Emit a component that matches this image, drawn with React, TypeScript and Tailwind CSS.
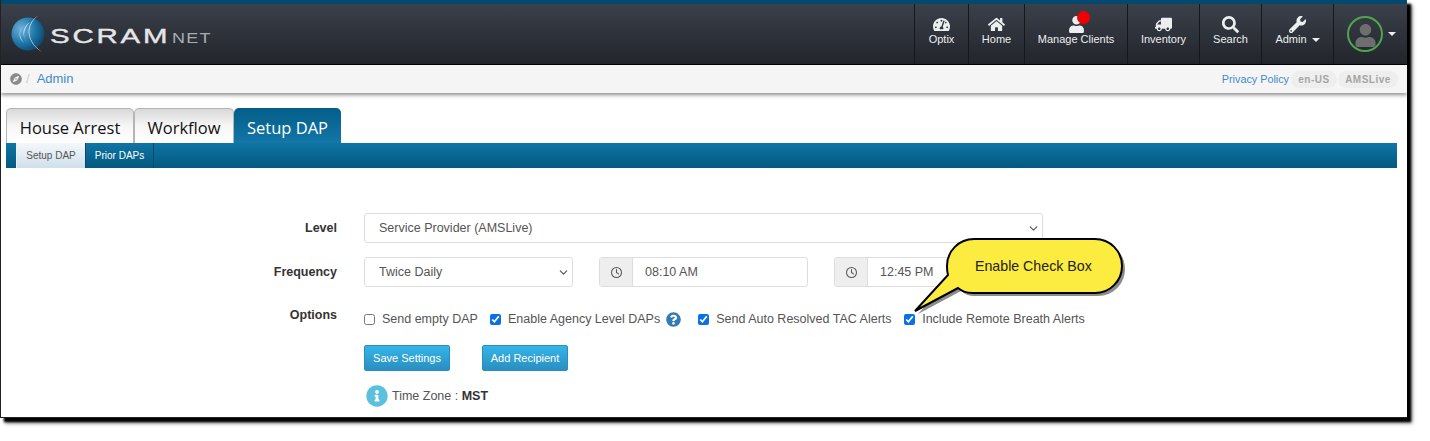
import type { ReactNode } from 'react'
import { FaCompass, FaHome, FaInfoCircle, FaQuestionCircle, FaSearch, FaTachometerAlt, FaTruck, FaUser, FaWrench } from 'react-icons/fa'
import { FaRegClock } from 'react-icons/fa6'
import { ChevronDown } from 'lucide-react'

const font = { sans: 'font-["Liberation_Sans",Arial,sans-serif]' }

const NavItem = ({ icon, label, width, caret, badge }: { icon: ReactNode; label: string; width: string; caret?: boolean; badge?: boolean }) => (
  <div className={`${width} relative flex h-full flex-col items-center border-l border-[#15171a] pt-[12px] text-[#eceef0]`}>
    <div className="relative flex h-[17px] items-center justify-center text-[17px]">
      {icon}
      {badge && <span className="absolute left-[9px] top-[-5px] h-[13px] w-[13px] rounded-full bg-[#f00000]" />}
    </div>
    <div className="mt-[-1px] flex items-center gap-[5px] whitespace-nowrap text-[11px] leading-[14px]">
      {label}
      {caret && <span className="mt-[1px] h-0 w-0 border-x-[4px] border-t-[4px] border-x-transparent border-t-[#eceef0]" />}
    </div>
  </div>
)

const Logo = () => (
  <div className="flex items-center pl-[10px]">
    <svg width="34" height="40" viewBox="0 0 34 40" className="mt-[-2px] shrink-0">
      <defs>
        <radialGradient id="globe" cx="0.3" cy="0.35" r="0.8">
          <stop offset="0" stopColor="#6fb4dc" />
          <stop offset="0.55" stopColor="#1d75a8" />
          <stop offset="1" stopColor="#0b3f60" />
        </radialGradient>
      </defs>
      <circle cx="17" cy="21" r="16.5" fill="url(#globe)" />
      <path d="M29 1C16 10 13 26 31 39C19 32 9 14 29 1Z" fill="#e6edf2" />
      <path d="M19 9C11 17 11 26 19 33C13 27 8 17 19 9Z" fill="#d4e2ec" />
      <path d="M13 12C7 18 7 25 13 30C9 25 7 18 13 12Z" fill="#b9d2e2" />
    </svg>
    <div className="ml-[5px] mt-[2px] flex items-baseline">
      <span className="text-[21px] leading-none tracking-[2px] text-[#e4e6e8] [-webkit-text-stroke:0.4px_#e4e6e8] [transform-origin:left] [transform:scaleX(1.4)]">SCRAM</span>
      <span className="ml-[36px] text-[15px] leading-none tracking-[1px] text-[#a9adb1] [transform-origin:left] [transform:scaleX(1.2)]">NET</span>
    </div>
  </div>
)

const Check = ({ label, checked, className }: { label: string; checked?: boolean; className?: string }) => (
  <label className={`${className ?? ''} flex items-center whitespace-nowrap`}>
    <input type="checkbox" defaultChecked={checked} className="mr-[7px] h-[11px] w-[11px] accent-[#0b6fe8]" />
    {label}
  </label>
)

const SelectBox = ({ value, className }: { value: string; className: string }) => (
  <div className={`${className} relative h-[30px]`}>
    <select className="h-full w-full appearance-none rounded-[3px] border border-[#ddd] bg-white pl-[14px] pr-[4px]">
      <option>{value}</option>
    </select>
    <ChevronDown size={13} strokeWidth={2} className="absolute right-[3px] top-[9px] text-[#555]" />
  </div>
)

const TimeField = ({ value, className }: { value: string; className: string }) => (
  <div className={`${className} flex h-[30px] rounded-[3px] border border-[#ddd]`}>
    <span className="flex w-[33px] items-center justify-center border-r border-[#ddd] bg-[#eee] text-[11px] text-[#555]">
      <FaRegClock />
    </span>
    <span className="flex flex-1 items-center pl-[12px]">{value}</span>
  </div>
)

const App = () => {
  return (
    <div className={`h-[441px] w-[1430px] overflow-hidden bg-white ${font.sans}`}>
      <div className="flex h-[418px] w-[1407px] flex-col border-b border-l border-[#222] bg-white shadow-[4px_4px_2px_#000,5px_5px_4px_rgba(0,0,0,0.6)]">
        {/* top bar */}
        <header className="flex h-[65px] shrink-0 justify-between border-b border-black border-t-[4px] border-t-[#03496f] bg-gradient-to-b from-[#3b404b] to-[#22252b]">
          <Logo />
          <nav className="flex h-full">
            <NavItem width="w-[54px]" icon={<FaTachometerAlt />} label="Optix" />
            <NavItem width="w-[56px]" icon={<FaHome />} label="Home" />
            <NavItem width="w-[103px]" icon={<FaUser />} label="Manage Clients" badge />
            <NavItem width="w-[72px]" icon={<FaTruck className="-scale-x-100" />} label="Inventory" />
            <NavItem width="w-[62px]" icon={<FaSearch />} label="Search" />
            <NavItem width="w-[72px]" icon={<FaWrench />} label="Admin" caret />
            <div className="flex h-full w-[74px] items-center border-l border-[#15171a] pl-[13px]">
              <div className="flex h-[36px] w-[36px] items-end justify-center overflow-hidden rounded-full border-2 border-[#4ea64e] text-[#6e6e6e]">
                <FaUser className="mb-[3px] text-[23px]" />
              </div>
              <span className="ml-[5px] h-0 w-0 border-x-[4px] border-t-[4px] border-x-transparent border-t-[#eceef0]" />
            </div>
          </nav>
        </header>

        {/* breadcrumb */}
        <div className="flex h-[28px] shrink-0 items-center justify-between bg-[#f5f5f5] pl-[9px] pr-[9px] shadow-[0_2px_4px_rgba(0,0,0,0.45)]">
          <div className="flex items-center text-[13px]">
            <FaCompass className="text-[12px] text-[#8a8a8a]" />
            <span className="ml-[4px] text-[#ccc]">/</span>
            <span className="ml-[7px] text-[#428bca]">Admin</span>
          </div>
          <div className="flex items-center text-[10.8px]">
            <span className="mr-[2px] text-[#428bca]">Privacy Policy</span>
            <span className="flex h-[17px] w-[46px] items-center justify-center rounded-full bg-[#eee] text-[10px] font-bold tracking-[0.5px] text-[#a5a5a5]">en-US</span>
            <span className="ml-[1px] flex h-[17px] w-[60px] items-center justify-center rounded-full bg-[#eee] text-[10px] font-bold tracking-[0.5px] text-[#a5a5a5]">AMSLive</span>
          </div>
        </div>

        {/* tabs */}
        <div className="ml-[5px] mr-[10px] mt-[15px] flex h-[35px] shrink-0 items-end font-['Open_Sans',sans-serif] text-[16.5px] font-medium">
          <div className="flex h-[35px] w-[128px] items-center justify-center rounded-t-[5px] border border-b-0 border-[#b5b5b5] bg-gradient-to-b from-[#d9d9d9] via-[#f6f6f6] to-white pt-[5px] text-[#111]">House Arrest</div>
          <div className="flex h-[35px] w-[100px] items-center justify-center rounded-t-[5px] border border-b-0 border-[#b5b5b5] bg-gradient-to-b from-[#d9d9d9] via-[#f6f6f6] to-white pt-[5px] text-[#111]">Workflow</div>
          <div className="flex h-[35px] w-[107px] items-center justify-center rounded-t-[5px] bg-gradient-to-b from-[#045d88] to-[#1377a8] pt-[5px] text-white">Setup DAP</div>
        </div>
        <div className="ml-[5px] mr-[10px] flex h-[25px] shrink-0 bg-gradient-to-b from-[#0f75a6] to-[#04597f] pl-[10px] text-[10px]">
          <div className="flex w-[69px] items-center justify-center border-l border-[#eaf2f7] bg-gradient-to-b from-[#f4f7fa] to-[#cfe0ec] text-[#555]">Setup DAP</div>
          <div className="flex w-[69px] items-center justify-center border-x border-[#04496a] text-white">Prior DAPs</div>
        </div>

        {/* form */}
        <div className="relative flex flex-col pt-[45px] text-[12.5px] text-[#555]">
          <div className="flex h-[30px] items-center">
            <div className="w-[336px] text-right font-bold text-[#333]">Level</div>
            <SelectBox value="Service Provider (AMSLive)" className="ml-[27px] w-[679px]" />
          </div>
          <div className="mt-[14px] flex h-[30px] items-center">
            <div className="w-[336px] text-right font-bold text-[#333]">Frequency</div>
            <SelectBox value="Twice Daily" className="ml-[27px] w-[209px]" />
            <TimeField value="08:10 AM" className="ml-[26px] w-[209px]" />
            <TimeField value="12:45 PM" className="ml-[26px] w-[209px]" />
          </div>
          <div className="mt-[19px] flex h-[26px] items-start">
            <div className="w-[336px] text-right font-bold leading-[18px] text-[#333]">Options</div>
            <div className="ml-[27px] flex h-[26px] items-center">
              <Check label="Send empty DAP" className="w-[126px]" />
              <Check label="Enable Agency Level DAPs" checked />
              <FaQuestionCircle className="ml-[6px] text-[15px] text-[#337ab7]" />
              <Check label="Send Auto Resolved TAC Alerts" checked className="ml-[17px] w-[206px]" />
              <Check label="Include Remote Breath Alerts" checked />
            </div>
          </div>
          <div className="ml-[363px] mt-[13px] flex gap-[32px] text-[11px] text-white">
            <button className="h-[26px] w-[86px] rounded-[2px] border border-[#2a8fc0] bg-gradient-to-b from-[#35b5e8] to-[#2a8fc0]">Save Settings</button>
            <button className="h-[26px] w-[86px] rounded-[2px] border border-[#2a8fc0] bg-gradient-to-b from-[#35b5e8] to-[#2a8fc0]">Add Recipient</button>
          </div>
          <div className="ml-[365px] mt-[14px] flex items-center">
            <FaInfoCircle className="text-[22px] text-[#5bc0de]" />
            <span className="ml-[4px]">Time Zone : <b className="text-[#333]">MST</b></span>
          </div>

          {/* callout */}
          <svg width="220" height="85" viewBox="0 0 220 85" className="absolute left-[906px] top-[66px] overflow-visible">
            <path d="M67 5H188C203 5 215 17 215 32C215 47 203 59 188 59H66C58 59 55 57 51 54L8 77L41 41C40 38 40 35 40 32C40 17 52 5 67 5Z" fill="#000" fillOpacity="0.45" transform="translate(3 3)" />
            <path d="M67 5H188C203 5 215 17 215 32C215 47 203 59 188 59H66C58 59 55 57 51 54L8 77L41 41C40 38 40 35 40 32C40 17 52 5 67 5Z" fill="#fcec3f" stroke="#000" strokeWidth="2" />
          </svg>
          <span className="absolute left-[974px] top-[89px] text-[14.2px] leading-[18px] text-[#222]">Enable Check Box</span>
        </div>
      </div>
    </div>
  )
}

export default App
